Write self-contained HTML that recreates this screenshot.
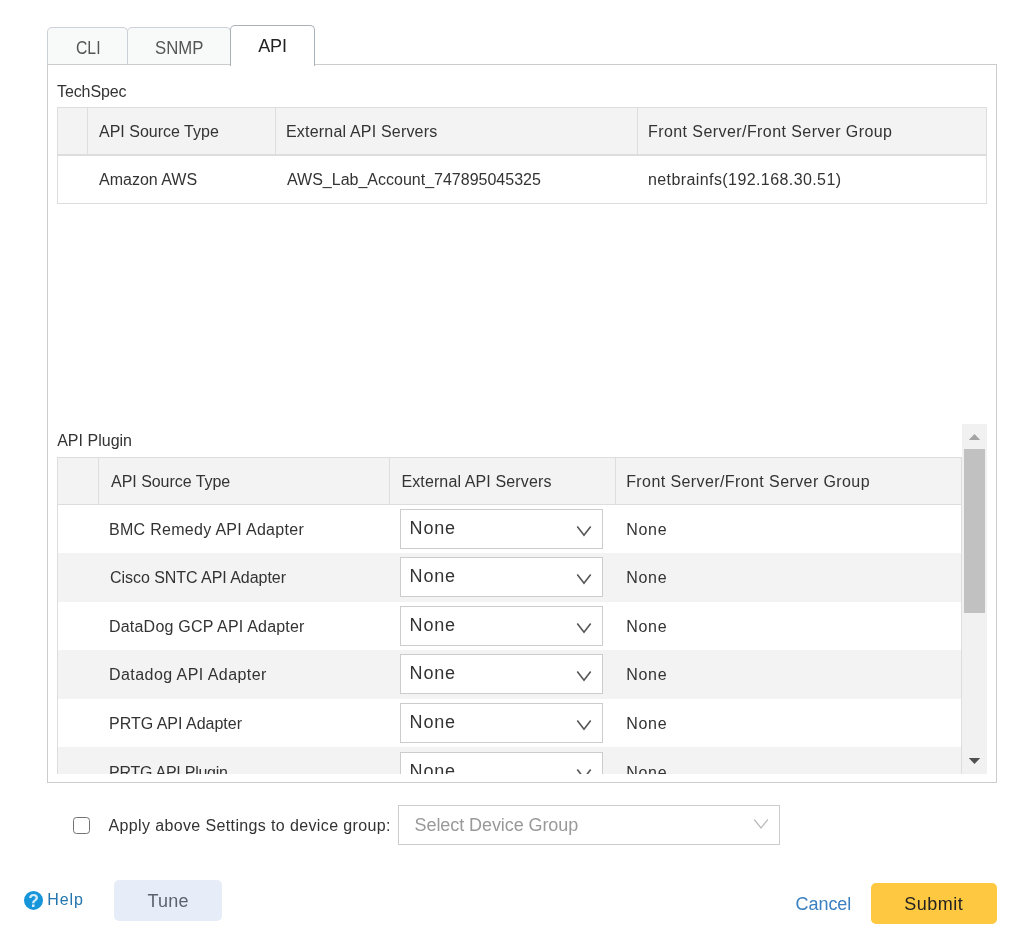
<!DOCTYPE html>
<html lang="en">
<head>
<meta charset="utf-8">
<title>API Settings</title>
<style>
*{box-sizing:border-box;margin:0;padding:0}
html,body{width:1021px;height:951px;background:#fff;overflow:hidden}
body{font-family:"Liberation Sans",sans-serif;font-size:16px;color:#333;position:relative;will-change:transform}
.abs{position:absolute}
.t{position:absolute;white-space:nowrap;line-height:20px;height:20px}
.tab{position:absolute;border:1px solid #ccd1d5;border-bottom:none;border-radius:5px 5px 0 0;background:#f8f9f9;color:#555}
.tab.active{background:#fff;border-color:#a9b1b9;color:#222}
.panel{position:absolute;left:47px;top:64px;width:950px;height:719px;border:1px solid #ccc;background:#fff}
.grid{position:absolute;border:1px solid #ddd;background:#fff}
.hd{position:absolute;background:#f3f3f3}
.vl{position:absolute;width:1px;background:#ddd}
.hl{position:absolute;height:1px;background:#ddd}
.row{position:absolute;left:1px;width:903px}
.row.alt{background:#f3f3f3}
.sel{position:absolute;border:1px solid #ccc;background:#fff}
.cv{position:absolute;display:block;line-height:0}
</style>
</head>
<body>

<div class="tab" style="left:47px;top:27px;width:81px;height:38px"><span class="t" id="cli" style="left:28.20px;top:10px;font-size:18px;transform:scaleX(0.875);transform-origin:0 0;">CLI</span></div>
<div class="tab" style="left:127px;top:27px;width:104px;height:38px"><span class="t" id="snmp" style="left:27.00px;top:10px;font-size:18px;transform:scaleX(0.93);transform-origin:0 0;">SNMP</span></div>
<div class="panel"></div>
<div class="tab active" style="left:230px;top:25px;width:85px;height:41px"><span class="t" id="api" style="left:27.20px;top:10px;font-size:18px;letter-spacing:-0.100px;">API</span></div>

<span class="t" id="techspec" style="left:57.05px;top:82px;letter-spacing:-0.115px;">TechSpec</span>
<div class="grid" style="left:57px;top:107px;width:930px;height:97px">
  <div class="hd" style="left:0;top:0;width:928px;height:46px"></div>
  <div class="hl" style="left:0;top:46px;width:928px;height:2px"></div>
  <div class="vl" style="left:29px;top:0;height:46px"></div>
  <div class="vl" style="left:217px;top:0;height:46px"></div>
  <div class="vl" style="left:579px;top:0;height:46px"></div>
  <span class="t" id="h1a" style="left:41.00px;top:14px;">API Source Type</span>
  <span class="t" id="h1b" style="left:228.00px;top:14px;letter-spacing:0.190px;">External API Servers</span>
  <span class="t" id="h1c" style="left:590.00px;top:14px;letter-spacing:0.427px;">Front Server/Front Server Group</span>
  <span class="t" id="d1a" style="left:41.00px;top:62px;">Amazon AWS</span>
  <span class="t" id="d1b" style="left:229.00px;top:62px;">AWS_Lab_Account_747895045325</span>
  <span class="t" id="d1c" style="left:590.00px;top:62px;letter-spacing:0.408px;">netbrainfs(192.168.30.51)</span>
</div>

<span class="t" id="plugin" style="left:57.20px;top:431px;letter-spacing:0.012px;">API Plugin</span>
<div class="abs" style="left:57px;top:424px;width:930px;height:350px;overflow:hidden">
  <div class="abs" style="left:0;top:33px;width:905px;height:400px;border:1px solid #ddd;border-bottom:none"></div>
  <div class="hd" style="left:1px;top:34px;width:903px;height:46px"></div>
  <div class="hl" style="left:1px;top:80px;width:903px"></div>
  <div class="vl" style="left:41px;top:34px;height:46px"></div>
  <div class="vl" style="left:332px;top:34px;height:46px"></div>
  <div class="vl" style="left:558px;top:34px;height:46px"></div>
  <span class="t" id="h2a" style="left:54.10px;top:48px;letter-spacing:-0.049px;">API Source Type</span>
  <span class="t" id="h2b" style="left:344.40px;top:48px;letter-spacing:0.125px;">External API Servers</span>
  <span class="t" id="h2c" style="left:569.20px;top:48px;letter-spacing:0.406px;">Front Server/Front Server Group</span>

  <div class="row" style="top:81px;height:48px">
    <span class="t" id="r0a" style="left:51.00px;top:15px;letter-spacing:0.295px;">BMC Remedy API Adapter</span>
    <div class="sel" style="left:342px;top:4px;width:203px;height:40px"><span class="t" id="r0s" style="left:8.60px;top:8px;font-size:18px;letter-spacing:0.833px;">None</span><span class="cv" style="left:175px;top:15px"><svg width="16" height="12" viewBox="0 0 16 12"><path d="M1.3 1.5 L8 10.3 L14.7 1.5" fill="none" stroke="#555" stroke-width="1.6"/></svg></span></div>
    <span class="t" id="r0n" style="left:568.20px;top:15px;letter-spacing:0.733px;">None</span>
  </div>
  <div class="row alt" style="top:129px;height:49px">
    <span class="t" id="r1a" style="left:52.00px;top:15px;letter-spacing:-0.048px;">Cisco SNTC API Adapter</span>
    <div class="sel" style="left:342px;top:4px;width:203px;height:40px"><span class="t" id="r1s" style="left:8.60px;top:8px;font-size:18px;letter-spacing:0.833px;">None</span><span class="cv" style="left:175px;top:15px"><svg width="16" height="12" viewBox="0 0 16 12"><path d="M1.3 1.5 L8 10.3 L14.7 1.5" fill="none" stroke="#555" stroke-width="1.6"/></svg></span></div>
    <span class="t" id="r1n" style="left:568.20px;top:15px;letter-spacing:0.733px;">None</span>
  </div>
  <div class="row" style="top:178px;height:48px">
    <span class="t" id="r2a" style="left:51.00px;top:15px;letter-spacing:0.205px;">DataDog GCP API Adapter</span>
    <div class="sel" style="left:342px;top:4px;width:203px;height:40px"><span class="t" id="r2s" style="left:8.60px;top:8px;font-size:18px;letter-spacing:0.833px;">None</span><span class="cv" style="left:175px;top:15px"><svg width="16" height="12" viewBox="0 0 16 12"><path d="M1.3 1.5 L8 10.3 L14.7 1.5" fill="none" stroke="#555" stroke-width="1.6"/></svg></span></div>
    <span class="t" id="r2n" style="left:568.20px;top:15px;letter-spacing:0.733px;">None</span>
  </div>
  <div class="row alt" style="top:226px;height:49px">
    <span class="t" id="r3a" style="left:51.00px;top:15px;letter-spacing:0.440px;">Datadog API Adapter</span>
    <div class="sel" style="left:342px;top:4px;width:203px;height:40px"><span class="t" id="r3s" style="left:8.60px;top:8px;font-size:18px;letter-spacing:0.833px;">None</span><span class="cv" style="left:175px;top:15px"><svg width="16" height="12" viewBox="0 0 16 12"><path d="M1.3 1.5 L8 10.3 L14.7 1.5" fill="none" stroke="#555" stroke-width="1.6"/></svg></span></div>
    <span class="t" id="r3n" style="left:568.20px;top:15px;letter-spacing:0.733px;">None</span>
  </div>
  <div class="row" style="top:275px;height:48px">
    <span class="t" id="r4a" style="left:51.00px;top:15px;letter-spacing:-0.007px;">PRTG API Adapter</span>
    <div class="sel" style="left:342px;top:4px;width:203px;height:40px"><span class="t" id="r4s" style="left:8.60px;top:8px;font-size:18px;letter-spacing:0.833px;">None</span><span class="cv" style="left:175px;top:15px"><svg width="16" height="12" viewBox="0 0 16 12"><path d="M1.3 1.5 L8 10.3 L14.7 1.5" fill="none" stroke="#555" stroke-width="1.6"/></svg></span></div>
    <span class="t" id="r4n" style="left:568.20px;top:15px;letter-spacing:0.733px;">None</span>
  </div>
  <div class="row alt" style="top:323px;height:49px">
    <span class="t" id="r5a" style="left:51.00px;top:16px;letter-spacing:-0.250px;">PRTG API Plugin</span>
    <div class="sel" style="left:342px;top:5px;width:203px;height:40px"><span class="t" id="r5s" style="left:8.60px;top:8px;font-size:18px;letter-spacing:0.833px;">None</span><span class="cv" style="left:175px;top:15px"><svg width="16" height="12" viewBox="0 0 16 12"><path d="M1.3 1.5 L8 10.3 L14.7 1.5" fill="none" stroke="#555" stroke-width="1.6"/></svg></span></div>
    <span class="t" id="r5n" style="left:568.20px;top:16px;letter-spacing:0.733px;">None</span>
  </div>
  <div class="abs" style="left:905px;top:0;width:25px;height:350px;background:#f1f1f1"></div>
  <div class="abs" style="left:907px;top:25px;width:21px;height:164px;background:#c1c1c1"></div>
  <svg class="abs" style="left:911px;top:9px" width="13" height="8" viewBox="0 0 13 8"><path d="M0.8 7 L6.5 1 L12.2 7 Z" fill="#a3a3a3"/></svg>
  <svg class="abs" style="left:911px;top:333px" width="13" height="8" viewBox="0 0 13 8"><path d="M0.8 1 L6.5 7 L12.2 1 Z" fill="#505050"/></svg>
</div>

<div class="abs" style="left:73.2px;top:817px;width:17.2px;height:17.4px;border:1.7px solid #727272;border-radius:3.5px;background:#fff"></div>
<span class="t" id="apply" style="left:108.50px;top:816px;letter-spacing:0.370px;">Apply above Settings to device group:</span>
<div class="sel" style="left:398px;top:805px;width:382px;height:40px"><span class="t" id="sdg" style="left:15.60px;top:9px;font-size:18px;letter-spacing:-0.083px;color:#999;">Select Device Group</span><span class="cv" style="left:354px;top:12px"><svg width="16" height="12" viewBox="0 0 16 12"><path d="M1.2 1.5 L8 10 L14.8 1.5" fill="none" stroke="#bdbdbd" stroke-width="1.3"/></svg></span></div>

<svg class="abs" style="left:24px;top:890px" width="20" height="21" viewBox="0 0 20 21"><circle cx="9.5" cy="10.4" r="9.5" fill="#1795db"/><text x="9.5" y="16.9" text-anchor="middle" font-family="Liberation Sans, sans-serif" font-weight="bold" font-size="17.5" fill="#d6ebf8">?</text></svg>
<span class="t" id="help" style="left:47.20px;top:890px;letter-spacing:0.900px;color:#2574ad;">Help</span>
<div class="abs" style="left:114px;top:880px;width:108px;height:41px;background:#e6edf9;border-radius:5px"><span class="t" id="tune" style="left:33.60px;top:11px;font-size:18px;letter-spacing:0.166px;color:#5b646d;">Tune</span></div>
<span class="t" id="cancel" style="left:795.50px;top:894px;font-size:18px;letter-spacing:-0.040px;color:#3b80c0;">Cancel</span>
<div class="abs" style="left:871px;top:883px;width:126px;height:41px;background:#fec840;border-radius:5px"><span class="t" id="submit" style="left:33.30px;top:11px;font-size:18px;letter-spacing:0.480px;color:#222;">Submit</span></div>

</body>
</html>
